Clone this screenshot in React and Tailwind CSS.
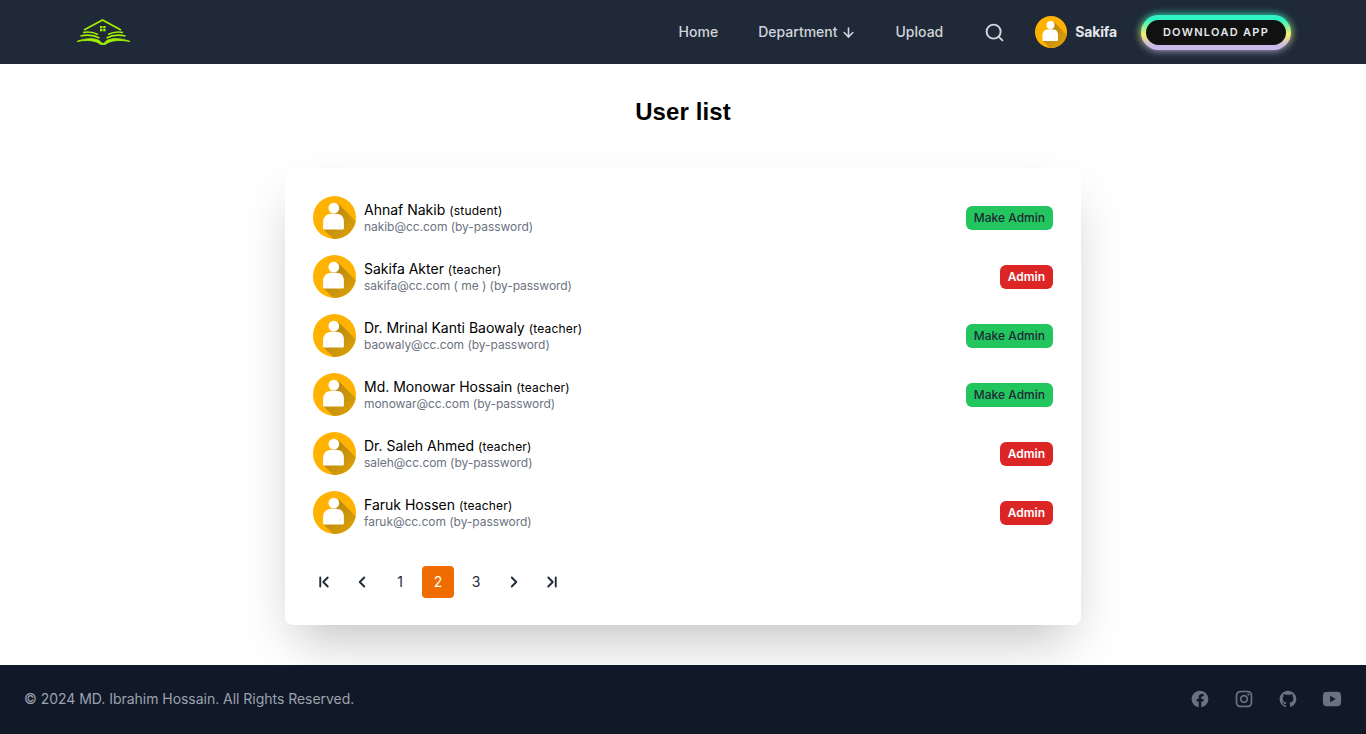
import { ChevronFirst, ChevronLast, ChevronLeft, ChevronRight, Search, ArrowDown } from 'lucide-react';
import { RiFacebookCircleFill, RiInstagramLine, RiGithubFill, RiYoutubeFill } from 'react-icons/ri';

const USERS = [
  { name: 'Ahnaf Nakib', role: 'student', email: 'nakib@cc.com', admin: false },
  { name: 'Sakifa Akter', role: 'teacher', email: 'sakifa@cc.com ( me )', admin: true },
  { name: 'Dr. Mrinal Kanti Baowaly', role: 'teacher', email: 'baowaly@cc.com', admin: false },
  { name: 'Md. Monowar Hossain', role: 'teacher', email: 'monowar@cc.com', admin: false },
  { name: 'Dr. Saleh Ahmed', role: 'teacher', email: 'saleh@cc.com', admin: true },
  { name: 'Faruk Hossen', role: 'teacher', email: 'faruk@cc.com', admin: true },
];

function Avatar({ size }) {
  return (
    <svg width={size} height={size} viewBox="0 0 64 64" className="shrink-0">
      <defs>
        <clipPath id="avatar-clip"><circle cx="32" cy="32" r="32" /></clipPath>
        <linearGradient id="avatar-shadow" x1="0.25" y1="0.25" x2="1" y2="1">
          <stop offset="0" stopColor="#b98a12" />
          <stop offset="1" stopColor="#eba800" />
        </linearGradient>
      </defs>
      <circle cx="32" cy="32" r="32" fill="#ffb300" />
      <path d="M37 11 L70 44 L70 70 L36 70 L16 50 Z" fill="url(#avatar-shadow)" clipPath="url(#avatar-clip)" />
      <circle cx="31" cy="18" r="8" fill="#fff" />
      <path d="M22 27.5 C25 26 37 26 40 27.5 C44 29 46 33 46 38 L46 48 C46 49.5 45 50 44 50 L17 50 C16 50 15 49.5 15 48 L15 38 C15 33 18 29 22 27.5 Z" fill="#fff" />
      <path d="M21 40 L21 50 M40 40 L40 50" stroke="#efe7d4" strokeWidth="0.8" />
    </svg>
  );
}

function Logo() {
  return (
    <svg width="53" height="26" viewBox="0 0 53 26" className="block">
      <path d="M7 11 L25.5 1 L44 11" fill="none" stroke="#a0f000" strokeWidth="1.8" />
      <rect x="23" y="7" width="2.4" height="2.3" fill="#a0f000" />
      <rect x="26.2" y="7" width="2.4" height="2.3" fill="#a0f000" />
      <rect x="23" y="10" width="2.4" height="2.3" fill="#a0f000" />
      <rect x="26.2" y="10" width="2.4" height="2.3" fill="#a0f000" />
      <path d="M6 13.5 C11 12.5 16 13 21 15.5 M46 13.5 C41 12.5 36 13 31 15.5" fill="none" stroke="#a0f000" strokeWidth="1.5" />
      <path d="M3.5 17 C10 15.5 17 16 22.5 19 M48.5 17 C42 15.5 35 16 29.5 19" fill="none" stroke="#a0f000" strokeWidth="1.7" />
      <path d="M0 22.5 C8 19 17 18.8 22 21.5 C24 22.6 24.3 24.5 26 24.5 C27.7 24.5 28 22.6 30 21.5 C35 18.8 44 19 53 22.5 C45 21 37.5 21 32.5 23 C29.5 24.2 28.5 26 26 26 C23.5 26 22.5 24.2 19.5 23 C14.5 21 7 21 0 22.5 Z" fill="#a0f000" stroke="#a0f000" strokeWidth="0.9" />
    </svg>
  );
}

function DownloadButton() {
  return (
    <div className="relative h-[35px] w-[150px]">
      <div className="absolute inset-0 rounded-full blur-[4px] bg-[linear-gradient(180deg,#2ff5c5_0%,#2ff5c5_14%,#f2f06c_55%,#c9b8e8_88%,#c9b8e8_100%)]" />
      <div className="absolute inset-0 rounded-full bg-[linear-gradient(180deg,#2ff5c5_0%,#2ff5c5_14%,#f2f06c_55%,#c9b8e8_88%,#c9b8e8_100%)]" />
      <button className="absolute inset-[5px] rounded-full bg-[#111111] pt-px text-[11px] font-semibold tracking-[1.3px] text-[#e5e7eb]">
        DOWNLOAD APP
      </button>
    </div>
  );
}

function Header() {
  return (
    <header className="flex h-16 items-center justify-between bg-[#1f2937] pl-[77px] pr-[75px]">
      <Logo />
      <nav className="flex items-center text-sm font-medium text-[#d1d5db]">
        <a className="mr-10">Home</a>
        <a className="mr-10 flex items-center gap-[3px]">
          Department <ArrowDown size={15} strokeWidth={2.5} />
        </a>
        <a className="mr-[41px]">Upload</a>
        <Search size={21} strokeWidth={2.25} className="mr-[30px]" />
        <Avatar size={32} />
        <span className="ml-2 mr-6 font-bold tracking-[-0.15px] text-[#e5e7eb]">Sakifa</span>
        <DownloadButton />
      </nav>
    </header>
  );
}

function UserRow({ user }) {
  return (
    <div className="flex h-[43px] items-center justify-between">
      <div className="flex items-center gap-2">
        <Avatar size={43} />
        <div>
          <div className="text-sm leading-[17px] text-black">
            {user.name} <span className="text-xs tracking-[0.2px]">({user.role})</span>
          </div>
          <div className="text-xs leading-[15px] tracking-[-0.05px] text-[#6b7280]">
            {user.email} (by-password)
          </div>
        </div>
      </div>
      {user.admin ? (
        <button className="h-6 rounded-md bg-[#dc2626] px-2 text-xs font-semibold text-white">Admin</button>
      ) : (
        <button className="h-6 rounded-md bg-[#22c55e] px-2 text-xs font-medium text-[#1f2937]">Make Admin</button>
      )}
    </div>
  );
}

function Pagination() {
  const cell = 'flex h-8 w-8 items-center justify-center rounded text-sm text-[#1f2937]';
  return (
    <div className="mt-8 -ml-[5px] flex gap-1.5">
      <button className={cell}><ChevronFirst size={18} strokeWidth={2.5} /></button>
      <button className={cell}><ChevronLeft size={18} strokeWidth={2.5} /></button>
      <button className={cell}>1</button>
      <button className="flex h-8 w-8 items-center justify-center rounded bg-[#ef6c00] text-sm text-white">2</button>
      <button className={cell}>3</button>
      <button className={cell}><ChevronRight size={18} strokeWidth={2.5} /></button>
      <button className={cell}><ChevronLast size={18} strokeWidth={2.5} /></button>
    </div>
  );
}

function Footer() {
  return (
    <footer className="flex h-[69px] items-center justify-between bg-[#111827] px-6 pb-[2px]">
      <p className="text-sm tracking-[-0.03px] text-[#9ca3af]">© 2024 MD. Ibrahim Hossain. All Rights Reserved.</p>
      <div className="flex items-center gap-6 text-[#6b7280]">
        <RiFacebookCircleFill size={20} />
        <RiInstagramLine size={20} />
        <RiGithubFill size={20} />
        <RiYoutubeFill size={22} className="-mx-px" />
      </div>
    </footer>
  );
}

export default function App() {
  return (
    <div className="min-h-screen bg-white font-['Inter',sans-serif]">
      <Header />
      <main>
        <h1 className="mb-10 pt-8 text-center font-['Liberation_Sans',sans-serif] text-2xl font-bold tracking-[0.1px] text-black">User list</h1>
        <div className="mx-auto mb-10 w-[796px] rounded-lg bg-white px-7 pt-7 pb-[27px] shadow-2xl">
          <div className="flex flex-col gap-4">
            {USERS.map((u) => <UserRow key={u.email} user={u} />)}
          </div>
          <Pagination />
        </div>
      </main>
      <Footer />
    </div>
  );
}
